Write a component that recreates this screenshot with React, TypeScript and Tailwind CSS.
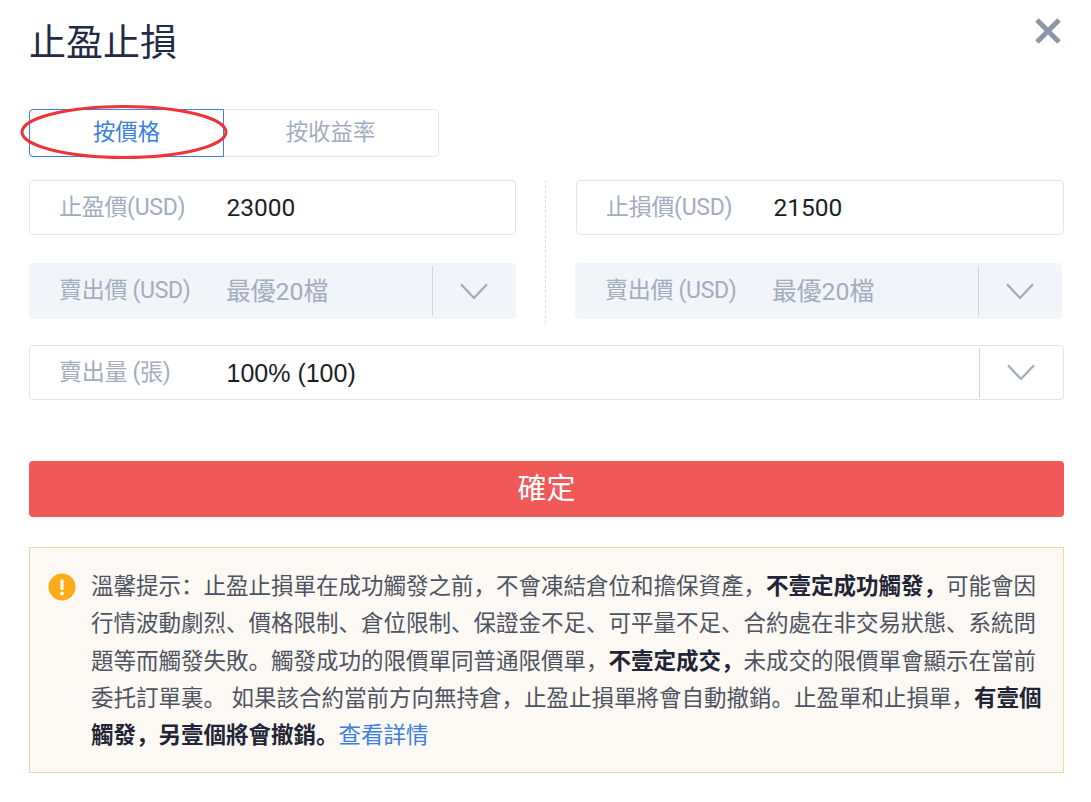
const font = { fontFamily: 'Roboto, "Noto Sans CJK SC", sans-serif' };

const Chevron = () => (
  <svg className="w-[28px] h-[17px]" viewBox="0 0 28 17" fill="none">
    <path d="M1 1.2 L14 15 L27 1.2" stroke="#a0aaba" strokeWidth="2.2" />
  </svg>
);

const InputBox = ({ label, value }: { label: string; value: string }) => (
  <div className="flex items-center h-[55px] border border-[#e2e5ec] rounded-[4px] pl-[29px] bg-white">
    <span className="w-[168px] text-[23px] leading-[30px] text-[#a3adbd] tracking-[-0.3px]">{label}</span>
    <span className="text-[24.5px] leading-[30px] text-[#1b1f27] -ml-[0.5px]">{value}</span>
  </div>
);

const DisabledSelect = () => (
  <div className="flex items-center h-[56px] rounded-[4px] pl-[30px] bg-[#f1f4f9]">
    <span className="w-[167px] text-[23px] leading-[30px] text-[#a3adbd] -mt-[1px] tracking-[-0.3px]">賣出價 (USD)</span>
    <span className="flex-1 text-[24.8px] leading-[30px] text-[#a3adbd] mt-[1px]">最優20檔</span>
    <div className="w-[84px] h-[50px] flex items-center justify-center border-l border-[#cfd4dd] pr-[2px]">
      <Chevron />
    </div>
  </div>
);

export default function App() {
  return (
    <div className="relative w-[1091px] h-[802px] bg-white overflow-hidden pl-[29px] pr-[27px]" style={font}>
      {/* Header */}
      <div className="flex items-start justify-between h-[109px]">
        <h1 className="text-[37px] leading-[50px] mt-[19px] text-[#232a45] font-normal">止盈止損</h1>
        <svg className="w-[26px] h-[26px] mt-[18px] mr-[3px]" viewBox="0 0 26 26">
          <path d="M2 2 L24 24 M24 2 L2 24" stroke="#8f93a8" strokeWidth="5" />
        </svg>
      </div>

      {/* Tabs */}
      <div className="relative flex w-[410px] h-[48px] border border-[#e2e5ec] rounded-[4px] text-[22.4px]">
        <div className="w-[195px] -m-px h-[48px] flex items-center justify-center border border-[#3b7fe0] rounded-l-[4px] text-[#3b7fe0]">按價格</div>
        <div className="flex-1 flex items-center justify-center text-[#a3adbd]">按收益率</div>
        <svg className="absolute left-[-10px] top-[-6px] w-[210px] h-[56px]" viewBox="0 0 210 56" fill="none">
          <ellipse cx="104" cy="28" rx="102" ry="25.5" stroke="#ef3339" strokeWidth="3" />
        </svg>
      </div>

      {/* Price rows */}
      <div className="flex mt-[23px] w-[1035px]">
        <div className="w-[487px] flex flex-col gap-[28px]">
          <InputBox label="止盈價(USD)" value="23000" />
          <DisabledSelect />
        </div>
        <div className="w-[60px] flex justify-center pr-[2px]">
          <div className="h-[143px] border-l border-dashed border-[#dcdfe6]" />
        </div>
        <div className="w-[488px] flex flex-col gap-[28px]">
          <InputBox label="止損價(USD)" value="21500" />
          <div className="-ml-px mr-[2px]">
            <DisabledSelect />
          </div>
        </div>
      </div>

      {/* Amount */}
      <div className="flex items-center h-[55px] mt-[22px] w-[1035px] border border-[#e2e5ec] rounded-[4px] pl-[29px]">
        <span className="w-[168px] text-[23px] leading-[30px] text-[#a3adbd] tracking-[-0.3px]">賣出量 (張)</span>
        <span className="flex-1 text-[25px] leading-[30px] text-[#1b1f27] -ml-[0.5px]" style={{ fontFamily: '"Liberation Sans", sans-serif' }}>100% (100)</span>
        <div className="w-[84px] h-[50px] flex items-center justify-center border-l border-[#cfd4dd] pr-[1px]">
          <Chevron />
        </div>
      </div>

      {/* Confirm */}
      <button className="block w-[1035px] h-[56px] mt-[61px] pt-[1px] bg-[#f15858] rounded-[4px] text-white text-[29px]">確定</button>

      {/* Notice */}
      <div className="flex w-[1035px] h-[226px] mt-[30px] bg-[#fcf8f3] border border-[#edd9ac] pl-[18px] pr-[18px] pt-[20px]">
        <svg className="w-[28px] h-[28px] shrink-0 mt-[5px]" viewBox="0 0 28 28">
          <circle cx="14" cy="14" r="13.5" fill="#fdab19" />
          <rect x="12.4" y="6.5" width="3.2" height="10.5" rx="1.2" fill="#fff" />
          <circle cx="14" cy="20.5" r="1.9" fill="#fff" />
        </svg>
        <p className="ml-[15px] text-[22.5px] leading-[37.3px] text-[#4e5361]">
          溫馨提示：止盈止損單在成功觸發之前，不會凍結倉位和擔保資產，<b className="text-[#1f2536]">不壹定成功觸發，</b>可能會因行情波動劇烈、價格限制、倉位限制、保證金不足、可平量不足、合約處在非交易狀態、系統問題等而觸發失敗。觸發成功的限價單同普通限價單，<b className="text-[#1f2536]">不壹定成交，</b>未成交的限價單會顯示在當前委托訂單裏。 如果該合約當前方向無持倉，止盈止損單將會自動撤銷。止盈單和止損單，<b className="text-[#1f2536]">有壹個觸發，另壹個將會撤銷。</b><span className="text-[#3b7fe0]">查看詳情</span>
        </p>
      </div>
    </div>
  );
}
